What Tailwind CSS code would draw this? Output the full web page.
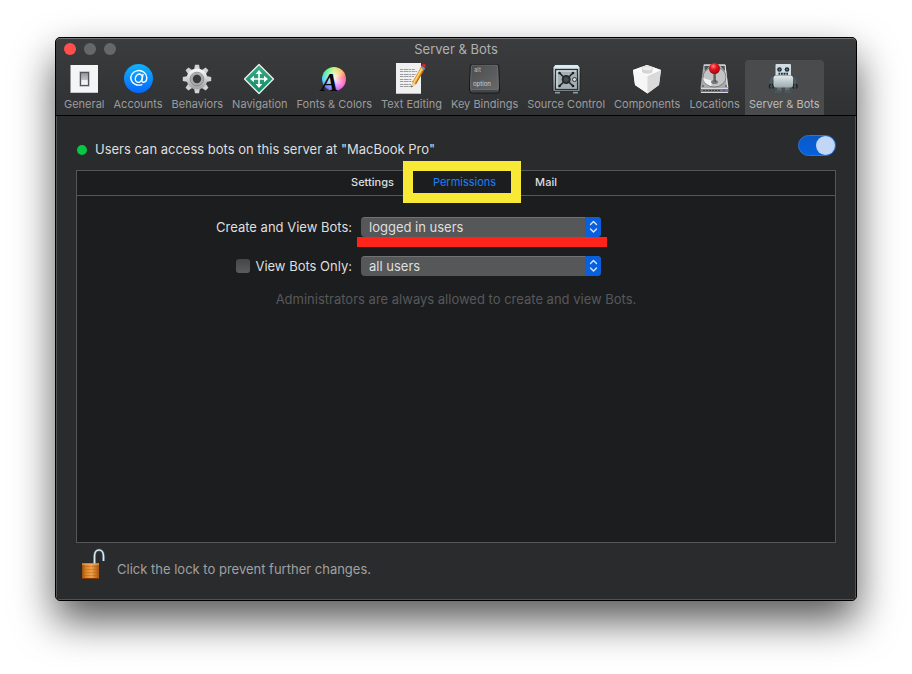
<!DOCTYPE html>
<html lang="en">
<head>
    <meta charset="UTF-8">
    <meta name="viewport" content="width=device-width, initial-scale=1.0">
    <title>Server &amp; Bots</title>
    <script src="https://cdn.jsdelivr.net/npm/@tailwindcss/browser@4"></script>
</head>
<body class="flex min-h-screen bg-white px-[55px] pt-[37px] pb-[73px] font-['Inter',sans-serif] text-[13px] text-[#dfdfdf] antialiased">
    <div class="flex flex-1 flex-col overflow-hidden rounded-[5px] border border-black bg-[#2a2b2d] shadow-[0_20px_40px_rgba(0,0,0,0.65)]">
        <header class="rounded-t-[4px] border-t border-b border-t-[#737475] border-b-black bg-linear-to-b from-[#3b3c3d] to-[#303132]">
            <!-- title bar -->
            <div class="grid h-[21px] grid-cols-[1fr_auto_1fr] items-center px-2 pb-px">
                <div class="flex gap-2">
                    <button aria-label="Close" class="size-3 rounded-full bg-[#ff4f4c]"></button>
                    <button aria-label="Minimize" class="size-3 rounded-full bg-[#666768]"></button>
                    <button aria-label="Zoom" class="size-3 rounded-full bg-[#666768]"></button>
                </div>
                <h1 class="leading-4 text-[#b0b1b2]">Server &amp; Bots</h1>
            </div>

            <!-- toolbar -->
            <nav class="flex gap-px pl-1 text-[11px] leading-[18px] text-[#9b9c9d]">
                <button class="flex h-[55px] flex-col items-center rounded-t px-1 pt-[3px]">
                    <svg class="size-8" viewBox="0 0 32 32">
                        <defs>
                            <linearGradient id="sw" x2="0" y2="1"><stop stop-color="#8e8f98"/><stop offset="1" stop-color="#e9e9ec"/></linearGradient>
                        </defs>
                        <path d="M2.500 2h27.500v28H2.500z" fill="#f3f5f7"/>
                        <path d="M3 29.500h27" stroke="#c4c6c9"/>
                        <rect x="11" y="8" width="11" height="16" rx="1" fill="#d4d5d9"/>
                        <rect x="12.500" y="9.500" width="8" height="13" fill="url(#sw)" stroke="#54555b" stroke-width="1.200"/>
                        <path d="M13.500 17h6v4.500h-6z" fill="#f2f2f4"/>
                    </svg>
                    <span>General</span>
                </button>
                <button class="flex h-[55px] flex-col items-center rounded-t px-1 pt-[3px]">
                    <svg class="size-8" viewBox="0 0 32 32">
                        <defs>
                            <linearGradient id="at" x2="0" y2="1"><stop stop-color="#10b2fb"/><stop offset="1" stop-color="#0667fb"/></linearGradient>
                        </defs>
                        <circle cx="16.500" cy="15.500" r="14.500" fill="url(#at)"/>
                        <g fill="none" stroke="#fff" stroke-width="1.400" stroke-linecap="round">
                            <path d="M19.800 21.600a8 7.300 0 1 1 5-7c0 3-1.600 4.700-3.300 4.700-1.500 0-1.900-1.200-1.500-2.900l1-5"/>
                            <ellipse cx="16.800" cy="15.200" rx="3.400" ry="4.200" transform="rotate(20 16.800 15.200)"/>
                        </g>
                    </svg>
                    <span>Accounts</span>
                </button>
                <button class="flex h-[55px] flex-col items-center rounded-t px-1 pt-[3px]">
                    <svg class="size-8" viewBox="0 0 32 32">
                        <defs>
                            <linearGradient id="gear" x2="0" y2="1"><stop stop-color="#f5f5f5"/><stop offset="1" stop-color="#a7a8aa"/></linearGradient>
                            <path id="tooth" d="M12.800 8 14 1.800h4L19.200 8z"/>
                        </defs>
                        <g fill="#d1d2d3">
                            <use href="#tooth"/>
                            <use href="#tooth" transform="rotate(45 16 16)"/>
                            <use href="#tooth" transform="rotate(90 16 16)"/>
                            <use href="#tooth" transform="rotate(135 16 16)"/>
                            <use href="#tooth" transform="rotate(180 16 16)"/>
                            <use href="#tooth" transform="rotate(225 16 16)"/>
                            <use href="#tooth" transform="rotate(270 16 16)"/>
                            <use href="#tooth" transform="rotate(315 16 16)"/>
                        </g>
                        <circle cx="16" cy="16" r="8" fill="#4b4c4d" stroke="url(#gear)" stroke-width="5"/>
                        <circle cx="16" cy="16" r="5.200" fill="#38393a" stroke="#a9aaab" stroke-width="2"/>
                        <circle cx="16" cy="16" r="6.800" fill="none" stroke="#737476" stroke-width=".7"/>
                    </svg>
                    <span>Behaviors</span>
                </button>
                <button class="flex h-[55px] flex-col items-center rounded-t px-1 pt-[3px]">
                    <svg class="size-8" viewBox="0 0 32 32">
                        <defs>
                            <linearGradient id="nav" x2="0" y2="1"><stop stop-color="#3dab86"/><stop offset="1" stop-color="#138b62"/></linearGradient>
                        </defs>
                        <path d="M15 1.500 29.500 16 15 30.500.5 16z" fill="url(#nav)" stroke="#e8f3ef" stroke-width="1.300" stroke-linejoin="round"/>
                        <path d="M15 9v14M8 16h14" stroke="#fff" stroke-width="1.600"/>
                        <path d="m15 7 3.300 4h-6.600zM15 25l3.300-4h-6.600zM6 16l4-3.300v6.600zM24 16l-4-3.300v6.600z" fill="#fff"/>
                    </svg>
                    <span>Navigation</span>
                </button>
                <button class="flex h-[55px] flex-col items-center rounded-t px-1 pt-[3px]">
                    <span class="relative block size-8">
                        <span class="absolute top-1 left-1 block size-6 rounded-full bg-[radial-gradient(circle,rgba(255,255,255,0.95),rgba(255,255,255,0)_75%),conic-gradient(#c4f06a,#ffb55a_45deg,#ff5a70_80deg,#ff5cc8_120deg,#b455ff_170deg,#4f6bff_220deg,#3fc8ff_265deg,#45f08a_315deg,#c4f06a)]"></span>
                        <svg class="absolute inset-0 size-8" viewBox="0 0 32 32">
                            <text x="3" y="28" font-family="Liberation Serif, serif" font-size="26" font-weight="bold" font-style="italic" fill="#08090b">A</text>
                        </svg>
                    </span>
                    <span>Fonts &amp; Colors</span>
                </button>
                <button class="flex h-[55px] flex-col items-center rounded-t px-1 pt-[3px]">
                    <svg class="size-8" viewBox="0 0 32 32">
                        <path d="M0 0h25v31H0z" fill="#f0f0f1"/>
                        <path d="M0 30.500h25" stroke="#bcbcbd"/>
                        <path d="M4 6.500h15M4 8.500h17M4 11.500h16M4 13.500h14M4 16.500h12M4 18.500h14M4 21.500h11M4 23.500h12" stroke="#909194" stroke-width=".9" stroke-dasharray="3 .6 5 .6 2 .6"/>
                        <path d="m15.300 24.500 1-5.500L25.500 3l3.500 2.200-9.200 16z" fill="#e79c2c"/>
                        <path d="m17.700 20 9-15.600" stroke="#ffdc7a" stroke-width="1.200"/>
                        <path d="m19.700 21 8.600-15" stroke="#a95f12"/>
                        <path d="m15.300 24.500 1-5.500 3.500 2.200z" fill="#ecd2a3"/>
                        <path d="m15.300 24.500.3-2 1.200.8z" fill="#222"/>
                        <path d="m24.500 4.600 1.100-1.900 3.600 2.200-1.100 1.900z" fill="#6d94c4"/>
                        <path d="m25.600 2.700.7-1.200q1-1.200 2.500-.4 1.400.9.900 2.600l-.6 1.200z" fill="#d9232b"/>
                    </svg>
                    <span>Text Editing</span>
                </button>
                <button class="flex h-[55px] flex-col items-center rounded-t px-1 pt-[3px]">
                    <svg class="size-8" viewBox="0 0 32 32">
                        <defs>
                            <linearGradient id="key" x2="1" y2="1"><stop stop-color="#4a4c4e"/><stop offset="1" stop-color="#66686a"/></linearGradient>
                        </defs>
                        <path d="M3.500 1.500h24q2 0 2.200 2L30.500 27q0 3-3 3h-24q-3 0-3-3l.8-23.500q.2-2 2.200-2z" fill="#55575a" stroke="#111213"/>
                        <path d="M4 2h23q1.500 0 1.600 1.500l.9 21q0 2-2 2h-24q-2 0-2-2l.9-21Q2.500 2 4 2z" fill="url(#key)" stroke="#77797b" stroke-width=".6"/>
                        <path d="M2.500 28h26" stroke="#323436"/>
                        <text x="5" y="8.500" font-family="Inter, sans-serif" font-size="6" fill="#bdbec0">alt</text>
                        <text x="4" y="23" font-family="Inter, sans-serif" font-size="6" fill="#d2d3d4">option</text>
                    </svg>
                    <span>Key Bindings</span>
                </button>
                <button class="flex h-[55px] flex-col items-center rounded-t px-1 pt-[3px]">
                    <svg class="size-8" viewBox="0 0 32 32">
                        <defs>
                            <linearGradient id="safe" x2="0" y2="1"><stop stop-color="#d5e3e8"/><stop offset="1" stop-color="#7e898e"/></linearGradient>
                        </defs>
                        <path d="M5 28h5v2.500H5zM23 28h5v2.500h-5z" fill="#8f999d"/>
                        <path d="M5 1.500h23l2 3v24H3v-24z" fill="url(#safe)" stroke="#171b1d" stroke-width=".7"/>
                        <path d="M5.500 2.200h22L29 4.800H4z" fill="#dcedf4"/>
                        <rect x="5.500" y="6.500" width="22" height="20" fill="#a5b0b4" stroke="#2a3033" stroke-width="1.200"/>
                        <path d="M7 25V8h19" fill="none" stroke="#e2eaed"/>
                        <path d="m9.500 10 13.500 13M23 10 9.500 23" stroke="#202426" stroke-width="1.600"/>
                        <circle cx="16.200" cy="16.500" r="4.500" fill="#272b2e"/>
                        <circle cx="16.200" cy="16.500" r="2.500" fill="#454b4f"/>
                        <g fill="#1b1e20"><circle cx="9.500" cy="10" r="1.300"/><circle cx="23" cy="10" r="1.300"/><circle cx="9.500" cy="23" r="1.300"/><circle cx="23" cy="23" r="1.300"/></g>
                        <circle cx="24.500" cy="16.500" r="2" fill="#d9e0e2" stroke="#24292b" stroke-width=".9"/>
                    </svg>
                    <span>Source Control</span>
                </button>
                <button class="flex h-[55px] flex-col items-center rounded-t px-1 pt-[3px]">
                    <svg class="size-8" viewBox="0 0 32 32">
                        <path d="M2 7 16 2l14 5-2 15-11.500 8.500L4 22z" fill="#eeeeef"/>
                        <path d="m2 7 14.500 6v17.500L4 22z" fill="#f6f6f6"/>
                        <path d="m30 7-13.500 6v17.500L28 22z" fill="#dadadb"/>
                        <path d="m2 7 14-5 14 5-13.500 6z" fill="#fbfbfb"/>
                        <path d="M11 6v2.500c0 3 10.500 3 10.500 0V6z" fill="#d5d5d6"/>
                        <ellipse cx="16.250" cy="5.500" rx="5.200" ry="2.300" fill="#ececed" stroke="#c7c7c8" stroke-width=".6"/>
                    </svg>
                    <span>Components</span>
                </button>
                <button class="flex h-[55px] flex-col items-center rounded-t px-1 pt-[3px]">
                    <svg class="size-8" viewBox="0 0 32 32">
                        <defs>
                            <radialGradient id="ball" cx=".4" cy=".3" r=".7"><stop stop-color="#ff8b87"/><stop offset=".4" stop-color="#ed1620"/><stop offset="1" stop-color="#9a0610"/></radialGradient>
                        </defs>
                        <g transform="translate(-1)">
                            <path d="M5.500 1.500h22L30.500 25H2.500z" fill="#a9aaab"/>
                            <path d="M6 2h21l2.500 22" fill="none" stroke="#e9e9e9"/>
                            <ellipse cx="16.500" cy="14" rx="11.500" ry="10" fill="#c3c4c5" stroke="#6e6f71" stroke-width=".8"/>
                            <path d="M5 15a11.500 10 0 0 0 8 8l2-5z" fill="#f3f3f3"/>
                            <path d="M6.500 3h5L7 8zM26.500 3h-4L27 8z" fill="#4f5052"/>
                            <circle cx="5" cy="23" r="1" fill="#626365"/><circle cx="28" cy="23" r="1" fill="#626365"/>
                            <path d="M2.500 25h28v4.500h-28z" fill="#77787a"/>
                            <path d="M3 25.500h27M3 29.500h27" stroke="#d9d9d9"/>
                            <path d="M5 27.500h18" stroke="#3b3c3e" stroke-dasharray="2 1"/>
                            <path d="M25 26.500h2v2h-2z" fill="#4c52e8"/>
                            <ellipse cx="16.500" cy="19" rx="3.500" ry="2" fill="#77787a"/>
                            <path d="M16.500 9v10" stroke="#37383a" stroke-width="2.200"/>
                            <path d="M16 9v10" stroke="#b1b2b3" stroke-width=".7"/>
                            <circle cx="16.500" cy="5.500" r="5.500" fill="url(#ball)"/>
                        </g>
                    </svg>
                    <span>Locations</span>
                </button>
                <button aria-current="page" class="flex h-[55px] flex-col items-center rounded-t bg-[#4a4b4c] px-1 pt-[3px] text-[#bbbcbd]">
                    <svg class="size-8" viewBox="0 0 32 32">
                        <defs>
                            <linearGradient id="bot" x2="0" y2="1"><stop stop-color="#e2eaed"/><stop offset="1" stop-color="#9caaaf"/></linearGradient>
                        </defs>
                        <g transform="translate(-1)">
                            <path d="M10 24h4.500v4H10zM18 24h4.500v4H18z" fill="#5f6d73"/>
                            <path d="M7.500 30q0-3 3.500-3t3.500 3zM17.500 30q0-3 3.500-3t3.500 3z" fill="#4a585e"/>
                            <path d="M7 15q-3 .5-3 3.500v3M25 15q3 .5 3 3.500v3" fill="none" stroke="#4b5e67" stroke-width="2.600"/>
                            <path d="M3.500 21q-2 2-.2 4.500M5 21q2.500 2 .5 4.500M27 21q-2 2-.2 4.500M29 21q2 2 .2 4.500" fill="none" stroke="#182429" stroke-width="1.400"/>
                            <rect x="6.500" y="12.500" width="19.500" height="12" rx="2.500" fill="url(#bot)"/>
                            <rect x="8.500" y="1" width="15.500" height="12" rx="1" fill="#d3dde1"/>
                            <path d="M9 12.500h14.500" stroke="#8c9a9f" stroke-width=".7"/>
                            <circle cx="12.500" cy="6.500" r="2.300" fill="#1c2b33"/><circle cx="20" cy="6.500" r="2.300" fill="#1c2b33"/>
                            <circle cx="12.500" cy="6.500" r="1" fill="#328ab5"/><circle cx="20" cy="6.500" r="1" fill="#328ab5"/>
                            <path d="M11.500 9.800h9.500v2h-9.500z" fill="#202d33"/>
                            <path d="M13.500 9.500V12M16.200 9.500V12M18.900 9.500V12" stroke="#d2dde1" stroke-width=".8"/>
                        </g>
                    </svg>
                    <span>Server &amp; Bots</span>
                </button>
            </nav>
        </header>

        <main class="flex flex-1 flex-col border border-t-0 border-[#525355] px-[19px] pt-[19px]">
            <div class="flex h-[21px] items-center">
                <span class="mt-2 ml-px size-[10px] rounded-full bg-[#07c840]"></span>
                <p id="access" class="mt-[7px] ml-2 flex-1 leading-4">Users can access bots on this server at "MacBook Pro"</p>
                <input type="checkbox" role="switch" aria-labelledby="access" checked class="h-[21px] w-[38px] appearance-none rounded-full border border-[#2b75dd] bg-linear-to-b from-[#0a58c8] to-[#0562de] before:ml-auto before:block before:size-[19px] before:rounded-full before:bg-[#c2d6f5]">
            </div>

            <section class="mt-[14px] flex-1 border border-[#555657] bg-[#1c1d1f]">
                <div role="tablist" class="flex h-[25px] items-center justify-center gap-[39px] border-b border-[#555657] pr-1 pb-px text-[11px] font-medium">
                    <button role="tab" aria-selected="false">Settings</button>
                    <button role="tab" aria-selected="true" class="relative font-normal text-[#1a81f5]">
                        Permissions
                        <span class="absolute -top-[13px] -right-[25px] -left-[30px] h-[42px] border-10 border-[#f7e935]"></span>
                    </button>
                    <button role="tab" aria-selected="false">Mail</button>
                </div>

                <form class="mt-[21px]">
                    <div class="grid grid-cols-[275px_240px] items-center gap-x-[9px] gap-y-[19px]">
                        <label for="create" class="pt-px text-right leading-[19px]">Create and View Bots:</label>
                        <div class="relative">
                            <select id="create" class="block h-5 w-full appearance-none rounded-[4px] border-t border-[#717274] bg-[#565759] pb-px pl-2 leading-4">
                                <option>logged in users</option>
                                <option>all users</option>
                            </select>
                            <svg class="pointer-events-none absolute top-0 right-0 h-5 w-4" viewBox="0 0 16 20">
                                <path d="M0 0h12q4 0 4 4v12q0 4-4 4H0z" fill="#0860df"/>
                                <path d="M5.500 7.500l3-3 3 3M5.500 12l3 3 3-3" fill="none" stroke="#dce9fc" stroke-width="1.400" stroke-linecap="round" stroke-linejoin="round"/>
                            </svg>
                            <span class="absolute top-5 -right-[6px] -left-1 h-[10px] bg-[#ff2419]"></span>
                        </div>

                        <div class="flex items-center justify-end gap-[5px]">
                            <input id="viewonly" type="checkbox" class="size-[14px] appearance-none rounded-[3px] bg-linear-to-b from-[#454648] to-[#5a5b5d]">
                            <label for="viewonly" class="pt-px leading-[19px]">View Bots Only:</label>
                        </div>
                        <div class="relative">
                            <select aria-label="View Bots Only" class="block h-5 w-full appearance-none rounded-[4px] border-t border-[#717274] bg-[#565759] pb-px pl-2 leading-4">
                                <option>all users</option>
                                <option>logged in users</option>
                            </select>
                            <svg class="pointer-events-none absolute top-0 right-0 h-5 w-4" viewBox="0 0 16 20">
                                <path d="M0 0h12q4 0 4 4v12q0 4-4 4H0z" fill="#0860df"/>
                                <path d="M5.500 7.500l3-3 3 3M5.500 12l3 3 3-3" fill="none" stroke="#dce9fc" stroke-width="1.400" stroke-linecap="round" stroke-linejoin="round"/>
                            </svg>
                        </div>
                    </div>
                    <p class="mt-[15px] text-center leading-4 text-[#57585a]">Administrators are always allowed to create and view Bots.</p>
                </form>
            </section>

            <footer class="flex h-[56px] items-start pt-[5px]">
                <button aria-label="Lock" class="size-8">
                    <svg class="size-8" viewBox="0 0 32 32">
                        <defs>
                            <linearGradient id="lock"><stop stop-color="#9b4b0c"/><stop offset=".2" stop-color="#d87d24"/><stop offset=".55" stop-color="#f0a047"/><stop offset="1" stop-color="#a95612"/></linearGradient>
                        </defs>
                        <path d="M18.500 16V8c0-8 9-8 9 0v5" fill="none" stroke="#46565e" stroke-width="3"/>
                        <path d="M18.500 16V8c0-8 9-8 9 0v5" fill="none" stroke="#d9e9ef" stroke-width="1.600"/>
                        <path d="M6 15.500h17V31H6z" fill="url(#lock)"/>
                        <path d="M6 18.500h17M6 21.500h17M6 24.500h17M6 27.500h17" stroke="#a85c18" stroke-opacity=".45" stroke-width=".8"/>
                        <path d="M6 16h17" stroke="#f0b56a"/>
                        <path d="M6 30.500h17" stroke="#813703"/>
                    </svg>
                </button>
                <p class="mt-[13px] ml-[9px] leading-4 text-[#a0a1a2]">Click the lock to prevent further changes.</p>
            </footer>
        </main>
    </div>
</body>
</html>
